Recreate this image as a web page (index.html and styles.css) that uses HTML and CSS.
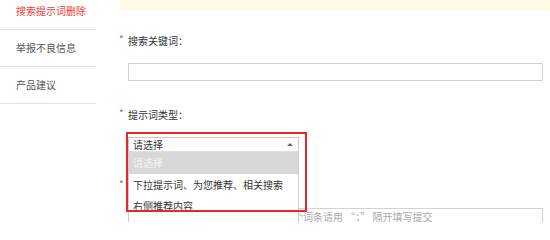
FILE: index.html
```html
<!DOCTYPE html>
<html lang="zh-CN">
<head>
<meta charset="utf-8">
<title>搜索提示词删除</title>
<link rel="stylesheet" href="styles.css">
</head>
<body>
<div class="page">
  <aside class="side">
    <div class="side-item active">搜索提示词删除</div>
    <div class="side-item">举报不良信息</div>
    <div class="side-item">产品建议</div>
  </aside>
  <main class="main">
    <div class="notice"></div>
    <div class="form">
      <div class="field">
        <div class="label"><span class="req">*</span>搜索关键词：</div>
        <input class="text-input" type="text">
      </div>
      <div class="field">
        <div class="label"><span class="req">*</span>提示词类型：</div>
        <div class="select-wrap">
          <div class="select"><span>请选择</span><span class="arrow"></span></div>
          <ul class="options">
            <li class="option selected">请选择</li>
            <li class="option">下拉提示词、为您推荐、相关搜索</li>
            <li class="option">右侧推荐内容</li>
          </ul>
        </div>
      </div>
      <div class="field">
        <div class="label"><span class="req">*</span></div>
        <textarea class="text-area" placeholder="请输入要删除的搜索提示词内容，多个词条请用 “；” 隔开填写提交"></textarea>
      </div>
    </div>
    <div class="highlight"></div>
  </main>
</div>
</body>
</html>
```
FILE: styles.css
```css
html, body {
  margin: 0;
  padding: 0;
  width: 550px;
  height: 222px;
  overflow: hidden;
  background: #fff;
}
body {
  font-family: "Noto Sans CJK SC", "Microsoft YaHei", sans-serif;
  font-size: 10px;
  color: #333;
}
.page {
  display: flex;
  align-items: flex-start;
}
.side {
  width: 96px;
  flex: none;
  margin-top: -7px;
  margin-right: 24px;
}
.side-item {
  height: 36px;
  line-height: 36px;
  padding-left: 16px;
  border-bottom: 1px solid #e3e3e3;
  color: #555;
}
.side-item.active {
  color: #ee3b3b;
}
.main {
  flex: 1;
  position: relative;
  height: 222px;
  overflow: hidden;
}
.notice {
  height: 10px;
  background: #fffbe4;
}
.form {
  margin-top: 24px;
  margin-right: 7px;
  padding-left: 8px;
}
.field {
  margin-bottom: 27px;
}
.label {
  height: 14px;
  line-height: 14px;
  margin-bottom: 15px;
  position: relative;
}
.req {
  position: absolute;
  left: -9px;
  top: -2px;
  color: #f04848;
  font-size: 10px;
}
.text-input {
  display: block;
  box-sizing: border-box;
  width: 100%;
  height: 18px;
  margin: 0;
  border: 1px solid #d3d3d3;
  padding: 0 4px;
  font: inherit;
  outline: none;
}
.select-wrap {
  position: relative;
  width: 171px;
}
.select {
  box-sizing: border-box;
  height: 15px;
  border: 1px solid #c8c8c8;
  border-bottom-color: #e0e0e0;
  padding: 0 5px 0 4px;
  line-height: 13px;
  display: flex;
  justify-content: space-between;
  align-items: center;
  background: #fff;
  color: #333;
}
.arrow {
  width: 0;
  height: 0;
  border-left: 3px solid transparent;
  border-right: 3px solid transparent;
  border-bottom: 3px solid #666;
}
.options {
  position: absolute;
  top: 100%;
  left: 0;
  right: 0;
  margin: 0;
  padding: 0;
  list-style: none;
  background: #fff;
  border: 1px solid #cfcfcf;
  border-top: none;
  height: 90px;
  z-index: 2;
}
.option {
  height: 21px;
  line-height: 21px;
  padding-left: 4px;
  color: #333;
  white-space: nowrap;
}
.option.selected {
  height: 22px;
  line-height: 22px;
  background: #d8d8d8;
  color: #f4f4f4;
}
.text-area {
  display: block;
  box-sizing: border-box;
  width: 100%;
  height: 14px;
  margin: 0;
  border: 1px solid #d3d3d3;
  border-bottom: none;
  padding: 2px 4px 0;
  font: inherit;
  line-height: 12px;
  resize: none;
  outline: none;
  overflow: hidden;
}
.text-area::placeholder {
  color: #aaa;
}
.highlight {
  position: absolute;
  left: 6px;
  top: 132px;
  width: 177px;
  height: 76px;
  border: 2px solid #e8262c;
  z-index: 3;
  pointer-events: none;
}
```
